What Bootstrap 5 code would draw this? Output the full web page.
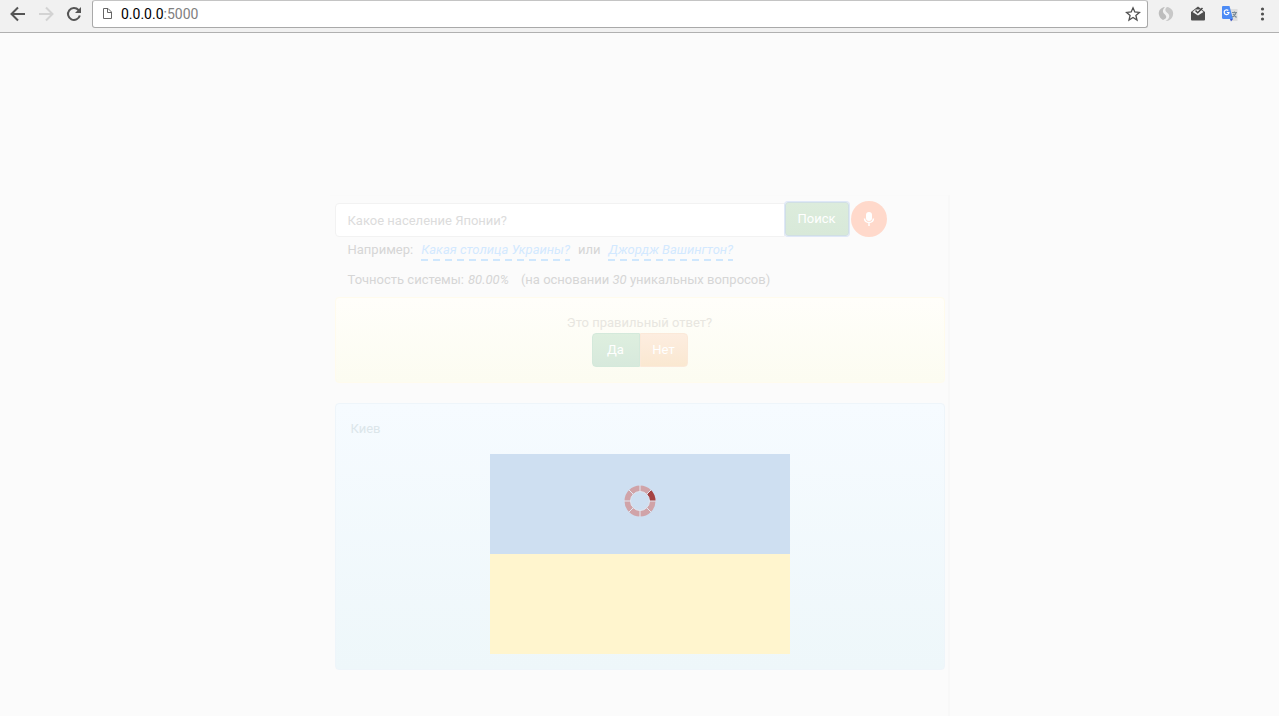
<!DOCTYPE html>
<html lang="ru">
<head>
<meta charset="utf-8">
<meta name="viewport" content="width=device-width, initial-scale=1">
<title>0.0.0.0:5000</title>
<link href="https://cdn.jsdelivr.net/npm/bootstrap@5.3.0/dist/css/bootstrap.min.css" rel="stylesheet">
<style>
  body { background: #fbfbfb; color: #d6d6d6; font-family: Roboto, "Noto Sans", sans-serif; font-size: 13px; line-height: 20px; }
  .browser-bar { background: #f1f1f1; border-bottom: 1px solid #b0b0b0; height: 33px; padding: 0 8px 4px; }
  .browser-bar svg { display: block; }
  .tool-btn { background: none; border: 0; padding: 0; }
  .nav-tools { gap: 8px; width: 84px; }
  .ext-tools { gap: 12px; width: 123px; padding-left: 8px; }
  .address { background: #fff; border: 1px solid #a9a9a9; border-top-color: #c4c4c4; border-radius: 3px; height: 28px; padding: 0 6px 0 8px; }
  .url-text { color: #808080; font-size: 14px; }
  .url-text b { color: #000; font-weight: 400; }
  .page-panel { width: 100%; max-width: 620px; margin-top: 162px; padding: 5px 3px 0 5px; border-right: 2px solid #f8f8f8; border-top: 1px solid #fafafa; }
  .page-body { max-width: 610px; }
  .query { width: 450px; height: 34px; border: 1px solid #f2f2f2; border-radius: 4px 0 0 4px; background: #fff; color: #dcdcdc; font-size: 13px; padding: 6px 12px; }
  .query:focus { color: #dcdcdc; box-shadow: none; border-color: #f2f2f2; }
  .btn-find, .btn-find:hover { width: 64px; height: 34px; padding: 0; font-size: 13px; color: #fff; border: 1px solid #d0dfe4; border-radius: 3px; background: linear-gradient(#dcecdc, #d8e9d9); box-shadow: 0 0 0 1px #dfe8f8; }
  .btn-mic { width: 36px; height: 36px; padding: 0; border: 0; border-radius: 50%; background: #ffd9cb; margin-left: 2px; }
  .hint-row { padding: 0 13px; height: 26px; }
  .accuracy-row { padding: 0 13px; height: 34px; }
  .hint-link { color: #d3e9ff; font-style: italic; text-decoration: none; height: 21px;
    background: repeating-linear-gradient(90deg, #cfe7fd 0 7px, transparent 7px 12px) left bottom / 100% 2px no-repeat; }
  .verdict { background: linear-gradient(#fffefa, #fcfcf1); border: 1px solid #fffbed; border-radius: 4px; padding: 15px; color: #e8e6e0; }
  .verdict .btn { width: 48px; height: 34px; padding: 0; font-size: 13px; color: #fff; }
  .btn-yes, .btn-yes:hover { background: linear-gradient(#deefdf, #d7e9dc); border: 1px solid #d4e9db; border-radius: 4px; }
  .btn-no, .btn-no:hover { background: linear-gradient(#fdede0, #fae8d1); border: 1px solid #fbe9d9; border-radius: 4px; }
  .answer { background: linear-gradient(#f6fbff, #eef7fa); border: 1px solid #eef5fa; border-radius: 4px; padding: 15px; color: #dce6ea; margin-top: 20px; }
  .flag { width: 300px; margin-top: 15px; }
  .flag-blue { height: 100px; background: #cedff1; padding-left: 1px; padding-bottom: 7px; }
  .flag-yellow { height: 100px; background: #fff5ce; }
</style>
</head>
<body class="d-flex flex-column min-vh-100">
<header class="browser-bar d-flex align-items-center">
  <div class="nav-tools d-flex flex-shrink-0">
    <button class="tool-btn" type="button" aria-label="Назад"><svg width="20" height="20" viewBox="0 0 20 20" fill="none" stroke="#555" stroke-width="2"><path d="M17 10H4M10 3.500L3.500 10L10 16.500"/></svg></button>
    <button class="tool-btn" type="button" aria-label="Вперёд"><svg width="20" height="20" viewBox="0 0 20 20" fill="none" stroke="#d3d3d3" stroke-width="2"><path d="M3 10H16M10 3.500L16.500 10L10 16.500"/></svg></button>
    <button class="tool-btn" type="button" aria-label="Обновить"><svg width="20" height="20" viewBox="0 0 20 20" fill="none" stroke="#555" stroke-width="2"><path d="M15.800 11.500A6 6 0 1 1 14.500 6L15.500 7"/><path d="M17 3V9H11Z" fill="#555" stroke="none"/></svg></button>
  </div>
  <div class="address d-flex align-items-center flex-grow-1">
    <svg width="12" height="14" viewBox="0 0 12 14" fill="none" stroke="#666" stroke-width="1"><path d="M2.500 1.500H7L10.500 5V11.500H2.500ZM6.500 1.500V5.500H10.500"/></svg>
    <span class="url-text flex-grow-1 ps-2"><b>0.0.0.0</b>:5000</span>
    <button class="tool-btn" type="button" aria-label="Закладка"><svg width="16" height="16" viewBox="0 0 16 16" fill="none" stroke="#505050" stroke-width="1.300"><path d="M8 1.800L9.800 6L14.400 6.400L10.900 9.400L12 14L8 11.500L4 14L5.100 9.400L1.600 6.400L6.200 6Z"/></svg></button>
  </div>
  <div class="ext-tools d-flex flex-shrink-0">
    <button class="tool-btn" type="button" aria-label="Расширение"><svg width="20" height="20" viewBox="0 0 20 20"><path d="M9 3C4.500 3.500 2 7 3 11C3.500 13 5 15 7 16C10 15 11.500 13 9 10.500C6.500 8.500 6 6 9 3Z" fill="#bdbdbd"/><path d="M11 3C15 3.500 18 7 17 11C16 15 13 17 9.500 17C13.500 15 14.500 11.500 11.500 9C9 7 8.500 5 11 3Z" fill="#c8c8c8"/></svg></button>
    <button class="tool-btn" type="button" aria-label="Почта"><svg width="20" height="20" viewBox="0 0 20 20"><path d="M3 8L10 2.500L17 8V15.500Q17 16.500 16 16.500H4Q3 16.500 3 15.500Z" fill="#4e4e4e"/><path d="M4.500 8L7.500 5.500H12.500L15.500 8L10 11.500Z" fill="#f1f1f1"/><path d="M7.500 6.500L9.700 8.700L14.500 4" stroke="#444" stroke-width="1.500" fill="none"/></svg></button>
    <button class="tool-btn" type="button" aria-label="Переводчик"><svg width="20" height="20" viewBox="0 0 20 20"><path d="M9 5H17.500V17H11Z" fill="#dedede"/><path d="M2.500 2H9.500L13 15H3.500Q2 15 2 13.500V3Z" fill="#4c8bf5"/><path d="M10 15H13L11 17.500Z" fill="#3a53c5"/><path d="M8.300 6.500A2.400 2.400 0 1 0 9 8.500H6.800" fill="none" stroke="#fff" stroke-width="1.200"/><path d="M12 8.500H17M14.500 7.500V8.500M16 8.500Q15 12 12 13M13 10L16.500 13.500" fill="none" stroke="#7c8c98" stroke-width="1.200"/></svg></button>
    <button class="tool-btn" type="button" aria-label="Меню"><svg width="20" height="20" viewBox="0 0 20 20" fill="#505050"><circle cx="10.500" cy="5" r="1.600"/><circle cx="10.500" cy="10" r="1.600"/><circle cx="10.500" cy="15" r="1.600"/></svg></button>
  </div>
</header>

<main class="page-panel mx-auto flex-grow-1">
  <div class="page-body mx-auto">
    <form class="d-flex align-items-center" onsubmit="return false">
      <input class="query form-control flex-shrink-1 align-self-end" type="text" value="Какое население Японии?" aria-label="Вопрос">
      <button class="btn btn-find flex-shrink-0" type="submit">Поиск</button>
      <button class="btn-mic d-flex align-items-center justify-content-center flex-shrink-0" type="button" aria-label="Голосовой ввод">
        <svg width="12" height="16" viewBox="0 0 12 16"><rect x="3" y="1" width="6" height="9" rx="3" fill="#fff"/><path d="M1.500 7.500Q2 11.500 6 11.500T10.500 7.500M6 11.500V15" fill="none" stroke="#fff" stroke-width="1.500"/></svg>
      </button>
    </form>
    <div class="hint-row d-flex align-items-center gap-2">
      <span>Например:</span><a class="hint-link" href="#">Какая столица Украины?</a><span>или</span><a class="hint-link" href="#">Джордж Вашингтон?</a>
    </div>
    <div class="accuracy-row d-flex align-items-center">
      <span>Точность системы:</span><em class="ms-1">80.00%</em><span class="ms-2 ps-1">(на основании <em>30</em> уникальных вопросов)</span>
    </div>
    <section class="verdict text-center">
      <div>Это правильный ответ?</div>
      <div class="btn-group d-inline-flex">
        <button class="btn btn-yes" type="button">Да</button>
        <button class="btn btn-no m-0" type="button">Нет</button>
      </div>
    </section>
    <section class="answer">
      <div>Киев</div>
      <div class="flag mx-auto" role="img" aria-label="Флаг Украины">
        <div class="flag-blue d-flex align-items-center justify-content-center">
          <svg width="32" height="32" viewBox="0 0 32 32" fill="none" stroke-width="6"><circle cx="16" cy="16" r="12.500" stroke="#d0a3a8"/><path d="M24.840 7.160A12.500 12.500 0 0 1 28.500 16" stroke="#a54343"/><path d="M16 0V32M0 16H32M4.700 4.700L27.300 27.300M27.300 4.700L4.700 27.300" stroke="#e2e8f2" stroke-width="1"/><circle cx="16" cy="16" r="9.500" fill="#cedff1" stroke="#e0e4ee" stroke-width="1"/></svg>
        </div>
        <div class="flag-yellow"></div>
      </div>
    </section>
  </div>
</main>
<script src="https://cdn.jsdelivr.net/npm/bootstrap@5.3.0/dist/js/bootstrap.bundle.min.js"></script>
</body>
</html>
